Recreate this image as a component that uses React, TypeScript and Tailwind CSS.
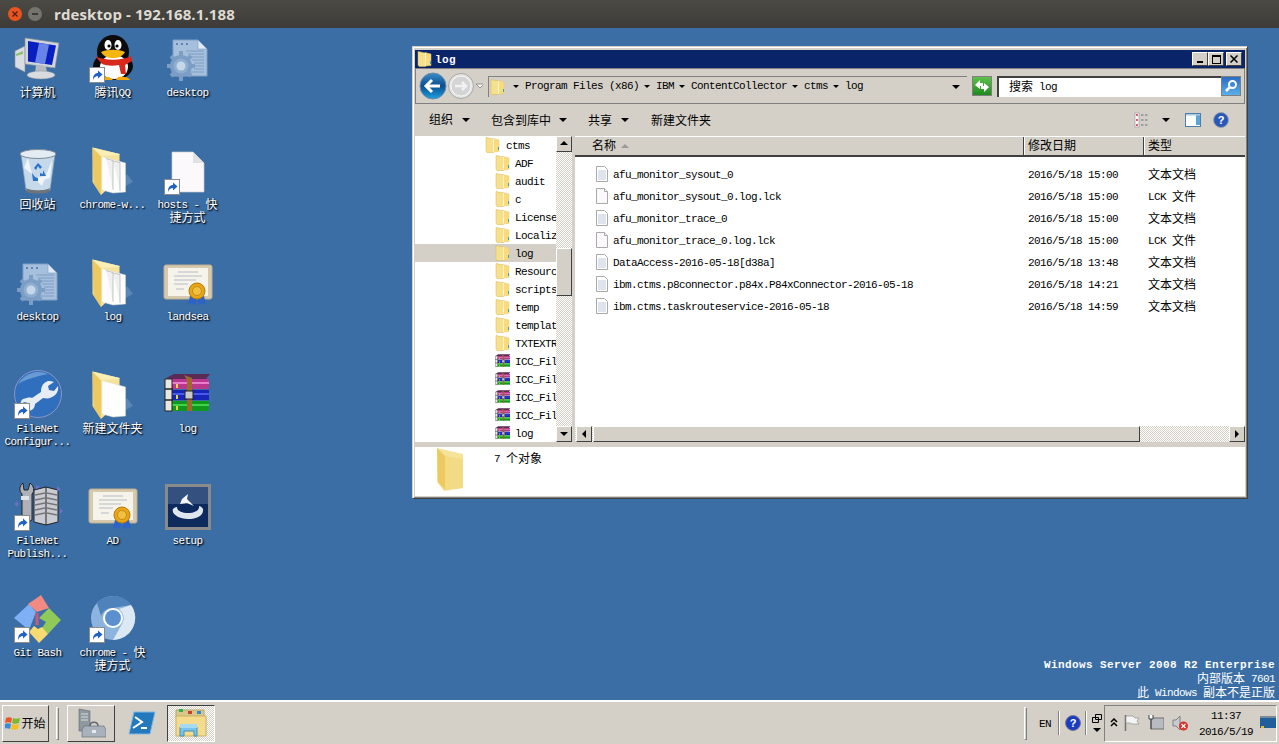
import React from 'react';

const RAISED = 'border border-t-white border-l-white border-r-[#404040] border-b-[#404040] bg-[#d4d0c8]';
const DITHER = 'bg-[repeating-conic-gradient(#d4d0c8_0_25%,#ffffff_0_50%)] bg-[length:2px_2px]';

// SimSun-ish: narrow latin, 12px CJK
function T({ s, wide }: { s: string; wide?: boolean }) {
  const parts = s.split(/([\u4e00-\u9fff]+)/);
  return (
    <>
      {parts.map((p, i) =>
        i % 2 === 1 ? (
          <span key={i} className="relative top-[1px] text-[12px] tracking-normal">{p}</span>
        ) : (
          <span key={i} className={wide ? 'whitespace-pre-wrap text-[11px] tracking-[0.4px]' : 'whitespace-pre-wrap text-[11px] tracking-[-0.6px]'}>{p}</span>
        ),
      )}
    </>
  );
}

function FolderSmall({ size = 16 }: { size?: number }) {
  return (
    <svg width={size} height={size} viewBox="0 0 16 16" className="shrink-0">
      <path d="M8 1.500 14 3v11.500L8 15z" fill="#f8dc7c" stroke="#e3c877" strokeWidth=".5" />
      <path d="M1 .5 8.500 2v13.500L2 15.500 1 14z" fill="#f7e08c" stroke="#d9b44e" strokeWidth=".5" />
      <path d="M8.500 2v13" stroke="#fff6c9" strokeWidth="1" />
      <path d="M13 10h1v3h-1z" fill="#3f9fc0" />
    </svg>
  );
}

function FolderBig({ papers = true }: { papers?: boolean }) {
  return (
    <svg width="48" height="48" viewBox="0 0 48 48" className="overflow-visible">
      <path d="M26 46 44 36l-6-8z" fill="#6d97c0" opacity=".6" />
      <path d="M3.500 1.500 30.500 8v24L12 49 3.500 36z" fill="#f6e39a" />
      <path d="M13 10.500 36.500 17v29L24 47l-11-3z" fill="#ffffff" stroke="#d8d8d0" strokeWidth=".5" />
      {papers && <path d="M17 12.500 24 14.500V44M24 15 31 16.500V45" fill="#f0f0f0" stroke="#b8b8b8" strokeWidth=".8" />}
      <path d="M3.500 1.500 12 10v39L4.500 37z" fill="#eec95f" />
      <path d="M3.500 1.500 30.500 8v1L12 10z" fill="#f9eeb4" />
    </svg>
  );
}

function DocLines() {
  return (
    <svg width="16" height="16" viewBox="0 0 16 16" className="shrink-0">
      <path d="M2.500.5h8l3 3v12h-11z" fill="#fff" stroke="#a9a9a9" />
      <path d="M4 5h8M4 7h8M4 9h8M4 11h8M4 13h8" stroke="#c0c8de" />
    </svg>
  );
}

function DocBlank() {
  return (
    <svg width="16" height="16" viewBox="0 0 16 16" className="shrink-0">
      <path d="M2.500.5h8l3 3v12h-11z" fill="#fbf9fc" stroke="#a9a9a9" />
      <path d="M10.500.5v3h3" fill="#eee" stroke="#a9a9a9" />
    </svg>
  );
}

function Rar({ size = 16 }: { size?: number }) {
  return (
    <svg width={size} height={size} viewBox="0 0 48 48" className="shrink-0">
      <path d="M2 8 10 4h36l-4 5H8z" fill="#5b2b55" />
      <path d="M3 9h42v10H3z" fill="#b8388f" />
      <path d="M3 12h42v2H3z" fill="#ec7ccb" />
      <path d="M3 20h42v10H3z" fill="#1725b8" />
      <path d="M3 23h42v2H3z" fill="#4a5ae8" />
      <path d="M3 31h42v10H3z" fill="#0f9a1e" />
      <path d="M3 34h42v2H3z" fill="#3fd24a" />
      <path d="M1 9h7v32H1z" fill="#e8e8e0" stroke="#222" strokeWidth="1" />
      <path d="M1 19h8M1 30h8" stroke="#222" strokeWidth="1.500" />
      <path d="M20 5 28 8v33h-5V10z" fill="#9b6a2c" />
      <rect x="21" y="21" width="8" height="8" fill="#c9c9c9" stroke="#222" />
      <path d="M12 14h2v4h-2zM12 25h2v4h-2zM12 36h2v4h-2z" fill="#e8d648" />
    </svg>
  );
}

function Shortcut() {
  return (
    <svg width="16" height="16" viewBox="0 0 16 16" className="absolute bottom-[-1px] left-0">
      <rect x=".5" y=".5" width="15" height="15" fill="#fff" stroke="#8c8c8c" />
      <path d="M4 13c0-5 2-7 5-7V3.500L13.500 7.500 9 11.500V9c-2 0-4 1-5 4z" fill="#1f62c4" />
    </svg>
  );
}

function Monitor() {
  return (
    <svg width="48" height="48" viewBox="0 0 48 48">
      <path d="M1 17 11 12v26L1 33z" fill="#d9dce0" stroke="#8a8f94" strokeWidth=".6" />
      <path d="M2 20l7-3v3l-7 2z" fill="#8fc06a" />
      <path d="M11 4 45 9 41 34 11 30z" fill="#cfd4da" stroke="#8a8f94" strokeWidth=".6" />
      <path d="M14 7 42 11.500 38 31 14 27.500z" fill="#0a1fc0" />
      <path d="M25 9 35 10.500 31 30 21 28.500z" fill="#7f9df2" opacity=".8" />
      <path d="M22 31l10 1 1 7H21z" fill="#b6bbc1" />
      <ellipse cx="27" cy="41" rx="14" ry="4" fill="#d8dce0" stroke="#8a8f94" strokeWidth=".5" />
    </svg>
  );
}

function QQ() {
  return (
    <svg width="48" height="48" viewBox="0 0 48 48">
      <ellipse cx="24" cy="18" rx="16" ry="17" fill="#0b0b0b" />
      <ellipse cx="24" cy="32" rx="20" ry="14" fill="#0b0b0b" />
      <ellipse cx="25" cy="33" rx="14" ry="12" fill="#fff" />
      <ellipse cx="19" cy="11" rx="3.500" ry="5" fill="#fff" />
      <ellipse cx="29" cy="11" rx="3.500" ry="5" fill="#fff" />
      <circle cx="20" cy="12" r="1.600" fill="#000" />
      <circle cx="28" cy="12" r="1.600" fill="#000" />
      <path d="M12 18c6-3 18-3 24 0-3 5-7 6-12 6s-9-1-12-6z" fill="#f5b50f" />
      <path d="M6 22c10 5 26 5 36 0l1 5-7 4 1 9h-5l-2-9c-6 1-11 1-17-1z" fill="#d8281c" />
      <path d="M14 43c4-1 8 0 10 3H14zM29 43c5-1 11 0 12 3H27z" fill="#f5a90a" />
    </svg>
  );
}

function GearDoc() {
  return (
    <svg width="48" height="48" viewBox="0 0 48 48">
      <path d="M9 6h25l9 9v27H9z" fill="#a6bfdd" stroke="#7f9fc6" />
      <path d="M34 6v9h9z" fill="#dfe9f3" stroke="#7f9fc6" strokeWidth=".6" />
      <path d="M12 10h2M17 10h2M22 10h2" stroke="#5f84b2" strokeWidth="2" />
      <path d="M22 17h18M24 20h16M26 23h14M28 26h12M30 29h10M30 32h10M30 35h10M26 38h14" stroke="#7f9dc2" />
      <circle cx="17" cy="32" r="11" fill="#7c9dc4" />
      <path d="M17 17v30M3 32h28M7 22l20 20M27 22 7 42" stroke="#7c9dc4" strokeWidth="4" />
      <circle cx="17" cy="32" r="7.500" fill="#8fadcf" />
      <circle cx="17" cy="32" r="4.500" fill="#c6d7ea" />
    </svg>
  );
}

function Bin() {
  return (
    <svg width="48" height="48" viewBox="0 0 48 48">
      <path d="M7 8 12 44c4 3 20 3 24 0l5-36z" fill="#c5d9ea" stroke="#8ca0b4" strokeWidth=".7" />
      <ellipse cx="24" cy="8" rx="18" ry="4.500" fill="#e4edf4" stroke="#7f8a94" />
      <path d="M14 12 18 28 10 22zM38 14 30 34l6-2zM20 32l8 8 4-10z" fill="#eef4f8" />
      <path d="M20 22l4-5 4 4-2 2-2-3-2 4zM29 24l3 6h-6v-3l3 1zM18 27l3 4 3 1v3h-5z" fill="#2c72c8" />
      <path d="M12 42c4 3 20 3 24 0l-1 4c-4 2-18 2-22 0z" fill="#6f747a" />
    </svg>
  );
}

function BlankPage() {
  return (
    <svg width="48" height="48" viewBox="0 0 48 48">
      <path d="M8 6h21l11 11v29H8z" fill="#fbf9fb" stroke="#c8c8cc" strokeWidth=".7" />
      <path d="M29 6v11h11z" fill="#e2e2e2" />
    </svg>
  );
}

function Cert() {
  return (
    <svg width="48" height="48" viewBox="0 0 48 48" className="overflow-visible">
      <rect x="0" y="7" width="48" height="34" rx="2" fill="#d6c9ad" stroke="#bcae90" />
      <rect x="4" y="10" width="40" height="28" fill="#f6f3ea" />
      <path d="M14 14h20M10 18h28M10 22h22M10 26h14M12 31h8" stroke="#b6bcc6" strokeWidth="1" />
      <path d="M26 38l-2 9 4-2 3 2 2-7zM40 38l2 9-4-2-3 2-2-7z" fill="#2d62c8" />
      <circle cx="33" cy="33" r="8" fill="#e8a614" stroke="#b77b0c" />
      <circle cx="33" cy="33" r="4.500" fill="#f0c042" stroke="#b77b0c" strokeWidth=".7" />
    </svg>
  );
}

function FileNetWrench() {
  return (
    <svg width="48" height="48" viewBox="0 0 48 48">
      <circle cx="24" cy="24" r="23.500" fill="#2f6fbd" stroke="#8e94c4" strokeWidth="1" />
      <path d="M4 14A24 24 0 0 1 34 4C24 6 10 10 4 14z" fill="#6a9ad4" />
      <path d="M9 29c4-1 6-2 9-1l9-6c0-4 1-9 7-11 2 0 4 0 6 1l-6 4 1 4 5 1 4-5c1 5-2 10-8 12-3 1-5 0-7 0l-8 6c0 3-2 7-7 7l-3-1 4-4-1-3-4-1-3 3c-1-2 0-5 2-6z" fill="#e6edf4" />
    </svg>
  );
}

function Publish() {
  return (
    <svg width="48" height="48" viewBox="0 0 48 48" className="overflow-visible">
      <path d="M20 8 32 5l12 3v32l-12 3-12-3z" fill="#c8ccd2" stroke="#222" />
      <path d="M32 5v38" stroke="#222" />
      <path d="M21 13l10-2M21 18l10-2M21 23l10-2M21 28l10-2M21 33l10-2M33 11l10 2M33 16l10 2M33 21l10 2M33 26l10 2M33 31l10 2" stroke="#777" strokeWidth="1.500" />
      <path d="M9 1l1 7h4l2-7c4 3 5 8 2 11v26l-5 3-5-3V12C5 9 5 4 9 1z" fill="#aeb2b8" stroke="#222" />
      <path d="M7 14h8v4H7z" fill="#e0e2e6" />
      <path d="M0 22l4-3v6zM46 26l3 3-3 3zM43 4l4 3-4 3zM22 3l4 2-4 2z" fill="#6f6fc8" />
    </svg>
  );
}

function Setup() {
  return (
    <svg width="48" height="48" viewBox="0 0 48 48">
      <rect x="2.500" y="3.500" width="43" height="43" fill="#0d2a5c" stroke="#8a8a8a" strokeWidth="3" />
      <rect x="4" y="5" width="40" height="17" fill="#33507f" />
      <path d="M9 27c-2 5 6 10 15 10s16-4 15-10c-1-2-3-3-4-3 1 4-4 7-11 7-6 0-11-2-11-6-2 0-3 1-4 2z" fill="#dfe6ee" />
      <path d="M18 17l6-5-1 5 7 7-7-3-7 1z" fill="#f4f6fa" />
    </svg>
  );
}

function GitIcon() {
  return (
    <svg width="48" height="50" viewBox="0 0 48 50" className="overflow-visible">
      <path d="M0 24 15 10 22 18 15 36z" fill="#7fb0f5" />
      <path d="M27 1 14 10 23 18 35 14z" fill="#f08a83" />
      <path d="M35 14 47 26 34 40 28 34 32 28 25 24z" fill="#8fc95a" />
      <path d="M15 38 20 32 24 35 28 33 34 40 25 49z" fill="#f6da72" />
      <path d="M23 19v12" stroke="#c85a7a" strokeWidth="3" />
    </svg>
  );
}

function Chromium() {
  return (
    <svg width="48" height="48" viewBox="0 0 48 48">
      <circle cx="24" cy="24" r="22" fill="#8db4de" />
      <path d="M8 9a22 22 0 0 1 34 2L24 14c-6 0-10 3-12 8z" fill="#4f82ba" />
      <path d="M42 11a22 22 0 0 1-18 35l9-16c3-5 2-11-3-15z" fill="#dce8f4" />
      <circle cx="24" cy="24" r="10" fill="#fff" />
      <circle cx="24" cy="24" r="8" fill="#5b8fd0" />
    </svg>
  );
}

function DesktopIcon({ label, icon, link }: { label: string; icon: React.ReactNode; link?: boolean }) {
  return (
    <div className="flex flex-col items-center pt-[6px]">
      <div className="relative h-[48px] w-[48px]">
        {icon}
        {link && <Shortcut />}
      </div>
      <div className="mt-[4px] w-[70px] text-center leading-[12px] text-white [text-shadow:1px_1px_2px_#000,1px_1px_1px_#14305a]">
        <T s={label} />
      </div>
    </div>
  );
}

const ICONS: { label: string; icon: React.ReactNode; link?: boolean }[] = [
  { label: '计算机', icon: <Monitor /> },
  { label: '回收站', icon: <Bin /> },
  { label: 'desktop', icon: <GearDoc /> },
  { label: 'FileNet Configur...', icon: <FileNetWrench />, link: true },
  { label: 'FileNet Publish...', icon: <Publish />, link: true },
  { label: 'Git Bash', icon: <GitIcon />, link: true },
  { label: '腾讯QQ', icon: <QQ />, link: true },
  { label: 'chrome-w...', icon: <FolderBig /> },
  { label: 'log', icon: <FolderBig /> },
  { label: '新建文件夹', icon: <FolderBig papers={false} /> },
  { label: 'AD', icon: <Cert /> },
  { label: 'chrome - 快捷方式', icon: <Chromium />, link: true },
  { label: 'desktop', icon: <GearDoc /> },
  { label: 'hosts - 快捷方式', icon: <BlankPage />, link: true },
  { label: 'landsea', icon: <Cert /> },
  { label: 'log', icon: <Rar size={48} /> },
  { label: 'setup', icon: <Setup /> },
];

const TREE = [
  { name: 'ADF' }, { name: 'audit' }, { name: 'c' }, { name: 'License' }, { name: 'Localiz' },
  { name: 'log', selected: true }, { name: 'Resourc' }, { name: 'scripts' }, { name: 'temp' },
  { name: 'templat' }, { name: 'TXTEXTR' },
  { name: 'ICC_Fil', rar: true }, { name: 'ICC_Fil', rar: true }, { name: 'ICC_Fil', rar: true },
  { name: 'ICC_Fil', rar: true }, { name: 'log', rar: true },
];

const FILES = [
  { name: 'afu_monitor_sysout_0', date: '2016/5/18 15:00', type: '文本文档' },
  { name: 'afu_monitor_sysout_0.log.lck', date: '2016/5/18 15:00', type: 'LCK 文件', blank: true },
  { name: 'afu_monitor_trace_0', date: '2016/5/18 15:00', type: '文本文档' },
  { name: 'afu_monitor_trace_0.log.lck', date: '2016/5/18 15:00', type: 'LCK 文件', blank: true },
  { name: 'DataAccess-2016-05-18[d38a]', date: '2016/5/18 13:48', type: '文本文档' },
  { name: 'ibm.ctms.p8connector.p84x.P84xConnector-2016-05-18', date: '2016/5/18 14:21', type: '文本文档' },
  { name: 'ibm.ctms.taskrouteservice-2016-05-18', date: '2016/5/18 14:59', type: '文本文档' },
];

function Caret({ className = '' }: { className?: string }) {
  return <span className={`inline-block h-0 w-0 border-x-[4px] border-t-[4px] border-x-transparent border-t-black ${className}`} />;
}

function MiniCaret() {
  return <span className="ml-[5px] mr-[6px] inline-block h-0 w-0 border-x-[3px] border-t-[3px] border-x-transparent border-t-black" />;
}

function WinBtn({ children, className = '' }: { children: React.ReactNode; className?: string }) {
  return <div className={`flex h-[14px] w-[16px] items-center justify-center ${RAISED} ${className}`}>{children}</div>;
}

function ScrollBtn({ dir }: { dir: 'up' | 'down' | 'left' | 'right' }) {
  const paths = { up: 'M1 6 5 2l4 4z', down: 'M1 3l4 4 4-4z', left: 'M7 1 3 5l4 4z', right: 'M3 1l4 4-4 4z' };
  return (
    <div className={`flex h-[16px] w-[16px] shrink-0 items-center justify-center ${RAISED}`}>
      <svg width="10" height="10" viewBox="0 0 10 10"><path d={paths[dir]} fill="#000" /></svg>
    </div>
  );
}

function AddressBar() {
  return (
    <div className="flex h-[36px] shrink-0 items-center border border-[#808080] pl-[3px] pr-[2px]">
      <svg width="64" height="28" viewBox="0 0 64 28" className="shrink-0">
        <defs>
          <linearGradient id="back" x1="0" y1="0" x2="0" y2="1">
            <stop offset="0" stopColor="#3a8cc8" />
            <stop offset=".5" stopColor="#0a4f90" />
            <stop offset="1" stopColor="#1ea0e0" />
          </linearGradient>
        </defs>
        <circle cx="42" cy="14" r="12.500" fill="#e4e4e4" stroke="#a8a8a8" />
        <circle cx="42" cy="14" r="10" fill="#d4d4d4" stroke="#f4f4f4" />
        <path d="M36 14h11M43 10l4 4-4 4" fill="none" stroke="#f2f2f2" strokeWidth="2.500" />
        <circle cx="14" cy="14" r="13" fill="url(#back)" stroke="#6a8aa8" />
        <path d="M21 14H8M13 8l-6 6 6 6" fill="none" stroke="#fff" strokeWidth="3" />
        <path d="M57 12h8l-4 4z" fill="#f4f4f4" stroke="#808080" strokeWidth=".8" />
      </svg>
      <div className="ml-[5px] flex h-[21px] w-[479px] items-center border-l border-t border-[#808080] pl-[1px]">
        <FolderSmall />
        <span className="ml-[2px] flex items-center">
          <MiniCaret />
          <T s="Program Files (x86)" />
          <MiniCaret />
          <T s="IBM" />
          <MiniCaret />
          <T s="ContentCollector" />
          <MiniCaret />
          <T s="ctms" />
          <MiniCaret />
          <T s="log" />
        </span>
        <Caret className="ml-auto mr-[7px]" />
      </div>
      <div className="ml-[5px] flex h-[20px] w-[20px] items-center justify-center border border-[#808080] bg-gradient-to-b from-[#5cc24a] to-[#1f8a1f]">
        <svg width="16" height="16" viewBox="0 0 16 16"><path d="M1 7l5-5v3h3v3H6v3zM15 9l-5 5v-3H7V8h3V5z" fill="#fff" /></svg>
      </div>
      <div className="ml-[5px] flex h-[21px] w-[224px] items-center border-l-2 border-t-2 border-[#404040] bg-white pl-[10px]">
        <T s="搜索 log" />
      </div>
      <div className="flex h-[20px] w-[20px] items-center justify-center border border-[#808080] bg-gradient-to-b from-[#2a6cc4] to-[#5cb0e8]">
        <svg width="16" height="16" viewBox="0 0 16 16">
          <circle cx="9.500" cy="6.500" r="3.500" fill="none" stroke="#fff" strokeWidth="2" />
          <path d="M7 9l-4 4" stroke="#fff" strokeWidth="2.500" />
        </svg>
      </div>
    </div>
  );
}

function CommandBar() {
  return (
    <div className="flex h-[32px] shrink-0 items-center pl-[14px]">
      <T s="组织" />
      <Caret className="ml-[9px]" />
      <span className="ml-[21px]"><T s="包含到库中" /></span>
      <Caret className="ml-[8px]" />
      <span className="ml-[21px]"><T s="共享" /></span>
      <Caret className="ml-[9px]" />
      <span className="ml-[22px]"><T s="新建文件夹" /></span>
      <div className="ml-auto mr-[16px] flex items-center">
        <svg width="16" height="16" viewBox="0 0 16 16">
          <rect x="1" y="1" width="4" height="14" fill="#fff" stroke="#8a8a9a" strokeWidth=".6" />
          <path d="M2 3h2M2 8h2M2 13h2" stroke="#c03030" strokeWidth="1.500" />
          <path d="M7 3h2.500M11 3h2.500M7 8h2.500M11 8h2.500M7 13h2.500M11 13h2.500" stroke="#6a6a7a" />
        </svg>
        <Caret className="ml-[12px]" />
        <svg width="16" height="16" viewBox="0 0 16 16" className="ml-[15px]">
          <rect x=".5" y="1.500" width="15" height="13" fill="#fff" stroke="#4f7ea8" />
          <rect x="11" y="3" width="4" height="10" fill="#5aa6d8" />
          <rect x="1" y="2" width="14" height="1.500" fill="#a6c8e4" />
        </svg>
        <svg width="16" height="16" viewBox="0 0 16 16" className="ml-[12px]">
          <circle cx="8" cy="8" r="7.500" fill="#2a58b8" stroke="#9aa0b0" />
          <text x="8" y="12" textAnchor="middle" fontSize="11" fontWeight="700" fontFamily="Liberation Sans, sans-serif" fill="#fff">?</text>
        </svg>
      </div>
    </div>
  );
}

function TreePane() {
  return (
    <div className="flex h-full shrink-0">
      <div className="w-[141px] overflow-hidden bg-white">
        <div className="flex h-[18px] items-center pl-[70px]">
          <FolderSmall />
          <span className="ml-[5px]"><T s="ctms" /></span>
        </div>
        {TREE.map((n, i) => (
          <div key={i} className={`flex h-[18px] items-center whitespace-nowrap pl-[80px] ${n.selected ? 'bg-[#d4d0c8]' : ''}`}>
            {n.rar ? <Rar /> : <FolderSmall />}
            <span className="ml-[4px]"><T s={n.name} /></span>
          </div>
        ))}
      </div>
      <div className={`flex w-[16px] flex-col ${DITHER}`}>
        <ScrollBtn dir="up" />
        <div className="mt-[96px] h-[48px] w-[16px] shrink-0 border border-t-white border-l-white border-r-[#404040] border-b-[#404040] bg-[#d4d0c8]" />
        <div className="mt-auto"><ScrollBtn dir="down" /></div>
      </div>
    </div>
  );
}

function FileList() {
  return (
    <div className="ml-[3px] flex h-full min-w-0 flex-1 flex-col bg-white">
      <div className="grid h-[21px] shrink-0 grid-cols-[448px_120px_1fr] border-t border-b-2 border-t-white border-b-[#404040] bg-[#d4d0c8]">
        <div className="flex items-center pl-[17px]">
          <T s="名称" />
          <span className="ml-[5px] h-0 w-0 border-x-[4px] border-b-[4px] border-x-transparent border-b-[#999999]" />
        </div>
        <div className="flex items-center border-l border-l-[#404040] pl-[4px] [box-shadow:inset_1px_0_0_#ffffff]"><T s="修改日期" /></div>
        <div className="flex items-center border-l border-l-[#404040] pl-[4px] [box-shadow:inset_1px_0_0_#ffffff]"><T s="类型" /></div>
      </div>
      <div className="min-h-0 flex-1 pt-[5px]">
        {FILES.map((f) => (
          <div key={f.name} className="grid h-[22px] grid-cols-[448px_120px_1fr] items-center whitespace-nowrap">
            <div className="flex items-center pl-[19px]">
              {f.blank ? <DocBlank /> : <DocLines />}
              <span className="ml-[3px]"><T s={f.name} /></span>
            </div>
            <div className="pl-[5px]"><T s={f.date} /></div>
            <div className="pl-[5px]"><T s={f.type} /></div>
          </div>
        ))}
      </div>
      <div className={`flex h-[16px] shrink-0 items-stretch pl-[1px] ${DITHER}`}>
        <ScrollBtn dir="left" />
        <div className={`ml-[1px] w-[547px] ${RAISED}`} />
        <div className="ml-auto"><ScrollBtn dir="right" /></div>
      </div>
    </div>
  );
}

function ExplorerWindow() {
  return (
    <div className="absolute left-[412px] top-[18px] flex h-[452px] w-[835px] flex-col border-t border-l border-t-[#d4d0c8] border-l-[#d4d0c8] bg-[#d4d0c8] pb-[2px] pl-[2px] pr-[2px] pt-[3px] shadow-[1px_1px_0_#404040,inset_1px_1px_0_#fff,inset_-1px_-1px_0_#808080]">
      <div className="flex h-[18px] shrink-0 items-center bg-[#0a246a] pl-[2px] pr-[3px]">
        <FolderSmall />
        <span className="ml-[2px] font-bold text-white"><T s="log" wide /></span>
        <div className="ml-auto flex items-center">
          <WinBtn><span className="mt-[6px] h-[2px] w-[6px] bg-black" /></WinBtn>
          <WinBtn><span className="h-[9px] w-[9px] border border-t-2 border-black" /></WinBtn>
          <WinBtn className="ml-[2px]">
            <svg width="8" height="8" viewBox="0 0 8 8"><path d="M.5.5l7 7M7.500.5l-7 7" stroke="#000" strokeWidth="1.500" /></svg>
          </WinBtn>
        </div>
      </div>
      <AddressBar />
      <CommandBar />
      <div className="flex h-[306px] shrink-0">
        <TreePane />
        <FileList />
      </div>
      <div className="mt-[5px] flex min-h-0 flex-1 bg-white pl-[20px]">
        <div className="h-[46px] w-[34px] overflow-hidden">
          <svg width="30" height="44" viewBox="0 0 30 44">
            <path d="M2 1 28 7v34L9 44 2 35z" fill="#f6e39a" />
            <path d="M2 1 10 9v34L3 35z" fill="#eec95f" />
            <path d="M10 9 28 12v29L10 43z" fill="#f3da85" />
          </svg>
        </div>
        <div className="ml-[25px] mt-[5px] leading-[12px]"><T s="7 个对象" /></div>
      </div>
    </div>
  );
}

function Taskbar() {
  return (
    <div className="flex h-[44px] shrink-0 items-center border-t-2 border-t-white bg-[#d4d0c8] pl-[2px] pr-[2px]">
      <div className={`flex h-[37px] w-[47px] items-center justify-center ${RAISED}`}>
        <svg width="16" height="16" viewBox="0 0 16 16" className="shrink-0">
          <path d="M1 3c2-1 4-1 6 0l-1 5C4 7 2 7 0 8z" fill="#e8562a" />
          <path d="M8 3c2 1 4 1 7 0l-1 5c-3 1-5 1-7 0z" fill="#7cb82f" />
          <path d="M0 9c2-1 4-1 6 0l-1 5c-2-1-4-1-6 0z" fill="#3a8ad8" />
          <path d="M7 9c2 1 4 1 7 0l-1 5c-3 1-5 1-7 0z" fill="#f4c01e" />
        </svg>
        <span><T s="开始" /></span>
      </div>
      <div className="ml-[7px] h-[33px] w-[3px] border border-t-white border-l-white border-r-[#808080] border-b-[#808080]" />
      <div className={`ml-[8px] flex h-[37px] w-[48px] items-center justify-center ${RAISED}`}>
        <svg width="30" height="30" viewBox="0 0 30 30">
          <path d="M3 1l11 2v20H3z" fill="#8f979f" stroke="#5f676f" strokeWidth=".6" />
          <path d="M5 6h7M5 9h7M5 12h7" stroke="#d8dde2" />
          <path d="M8 18h20l2 4v7H6v-7z" fill="#a8b2bc" stroke="#5f676f" strokeWidth=".6" />
          <path d="M14 18c0-5 8-5 8 0" fill="none" stroke="#5f676f" strokeWidth="1.500" />
          <rect x="16" y="22" width="4" height="3" fill="#e6eaee" />
        </svg>
      </div>
      <div className="ml-[12px] flex w-[30px] justify-center">
        <svg width="28" height="24" viewBox="0 0 28 24">
          <path d="M6 1h21l-5 22H1z" fill="#2478bc" stroke="#7ab8e4" />
          <path d="M7 6l7 5-9 6" fill="none" stroke="#fff" strokeWidth="2" />
          <path d="M13 17h6" stroke="#fff" strokeWidth="2" />
        </svg>
      </div>
      <div className={`ml-[10px] flex h-[37px] w-[48px] items-center justify-center border border-t-[#404040] border-l-[#404040] border-r-white border-b-white ${DITHER}`}>
        <svg width="32" height="30" viewBox="0 0 32 30">
          <path d="M1 2h28v8H1z" fill="#d8c98a" stroke="#b5a66a" />
          <path d="M4 1h4v3H4z" fill="#32b04a" />
          <path d="M13 3h4v3h-4z" fill="#d03c2e" />
          <path d="M22 3h4v3h-4z" fill="#2e8ad8" />
          <path d="M1 8h30v20H1z" fill="#f4dc8c" stroke="#c8b060" />
          <path d="M5 19h17v9h-3v-5H9v5H5z" fill="#7ac4ec" stroke="#3f8ec0" />
          <path d="M5 16h17v4H5z" fill="#a4daf4" />
        </svg>
      </div>

      <div className="ml-auto h-[33px] w-[3px] border border-t-white border-l-white border-r-[#808080] border-b-[#808080]" />
      <div className="ml-[12px] leading-[12px]"><T s="EN" /></div>
      <div className="ml-[7px] h-[24px] w-[2px] border-l border-r border-l-[#808080] border-r-white" />
      <svg width="16" height="16" viewBox="0 0 16 16" className="ml-[5px]">
        <circle cx="8" cy="8" r="7.500" fill="#1a3cc0" stroke="#7a7a90" />
        <text x="8" y="12" textAnchor="middle" fontSize="11" fontWeight="700" fontFamily="Liberation Sans, sans-serif" fill="#fff">?</text>
      </svg>
      <div className="ml-[4px] h-[24px] w-[2px] border-l border-r border-l-[#808080] border-r-white" />
      <div className="ml-[5px] flex w-[10px] flex-col items-center gap-[5px]">
        <svg width="10" height="9" viewBox="0 0 10 9"><path d="M3.500.5h6v5h-6zM.5 3.500h6v5h-6z" fill="#d4d0c8" stroke="#000" /></svg>
        <Caret />
      </div>
      <div className="ml-[2px] flex h-[37px] w-[173px] items-center border border-t-[#808080] border-l-[#808080] border-r-white border-b-white pl-[5px]">
        <svg width="8" height="10" viewBox="0 0 8 10"><path d="M1 4l3-3 3 3M1 8l3-3 3 3" fill="none" stroke="#000" strokeWidth="1.500" /></svg>
        <svg width="16" height="18" viewBox="0 0 16 18" className="ml-[6px]">
          <path d="M1.500 1v16" stroke="#707070" strokeWidth="1.500" />
          <path d="M2 2h7l2 2h4l-2 3 2 3H8l-2-1H2z" fill="#f4f4f4" stroke="#909090" strokeWidth=".7" />
        </svg>
        <svg width="16" height="18" viewBox="0 0 16 18" className="ml-[8px]">
          <rect x="3" y="4" width="13" height="11" fill="#b8bcc0" stroke="#707070" />
          <path d="M1 1v4h4V1M3 5v10" fill="#fff" stroke="#404040" />
        </svg>
        <svg width="16" height="16" viewBox="0 0 16 16" className="ml-[8px]">
          <path d="M1 5h3l4-4v14l-4-4H1z" fill="#c8ccd0" stroke="#808080" />
          <circle cx="11.500" cy="11" r="4.500" fill="#d8342a" />
          <path d="M9.500 9l4 4M13.500 9l-4 4" stroke="#fff" strokeWidth="1.200" />
        </svg>
        <div className="ml-[11px] mt-[2px] flex w-[54px] flex-col items-center gap-[4px] leading-[12px]">
          <T s="11:37" />
          <T s="2016/5/19" />
        </div>
        <svg width="16" height="14" viewBox="0 0 16 14" className="ml-[7px]">
          <rect width="16" height="12" fill="#1f5f9c" />
          <rect x="0" y="0" width="16" height="2" fill="#7a8a9a" />
          <rect x="1" y="10" width="3" height="2" fill="#e8c030" />
        </svg>
      </div>
    </div>
  );
}

export default function App() {
  return (
    <div className="flex h-[744px] w-[1279px] flex-col overflow-hidden bg-[#3a6ea5] font-['Liberation_Mono','Noto_Sans_CJK_SC',monospace] text-black">
      <div className="flex h-[28px] shrink-0 items-center bg-gradient-to-b from-[#4b4a45] to-[#3c3b37] pl-[8px]">
        <div className="flex h-[14px] w-[14px] items-center justify-center rounded-full bg-[#e9541f]">
          <svg width="6" height="6" viewBox="0 0 6 6"><path d="M.5.500l5 5M5.500.500l-5 5" stroke="#4a2010" strokeWidth="1.200" /></svg>
        </div>
        <div className="ml-[6px] flex h-[14px] w-[14px] items-center justify-center rounded-full bg-[#75736d]">
          <span className="h-[1.500px] w-[6px] bg-[#3c3b37]" />
        </div>
        <span className="ml-[12px] font-['Open_Sans',sans-serif] text-[15px] font-bold tracking-[0.1px] text-[#dfdbd2]">rdesktop - 192.168.1.188</span>
      </div>

      <div className="relative flex-1">
        <div className="grid grid-flow-col auto-cols-[75px] grid-rows-[repeat(6,112px)]">
          {ICONS.map((it, i) => (
            <DesktopIcon key={i} {...it} />
          ))}
        </div>

        <ExplorerWindow />

        <div className="absolute bottom-[0px] right-[4px] text-right leading-[13px] text-white">
          <div className="font-bold"><T s="Windows Server 2008 R2 Enterprise" wide /></div>
          <div><T s="内部版本 7601" /></div>
          <div><T s="此 Windows 副本不是正版" /></div>
        </div>
      </div>

      <Taskbar />
    </div>
  );
}
